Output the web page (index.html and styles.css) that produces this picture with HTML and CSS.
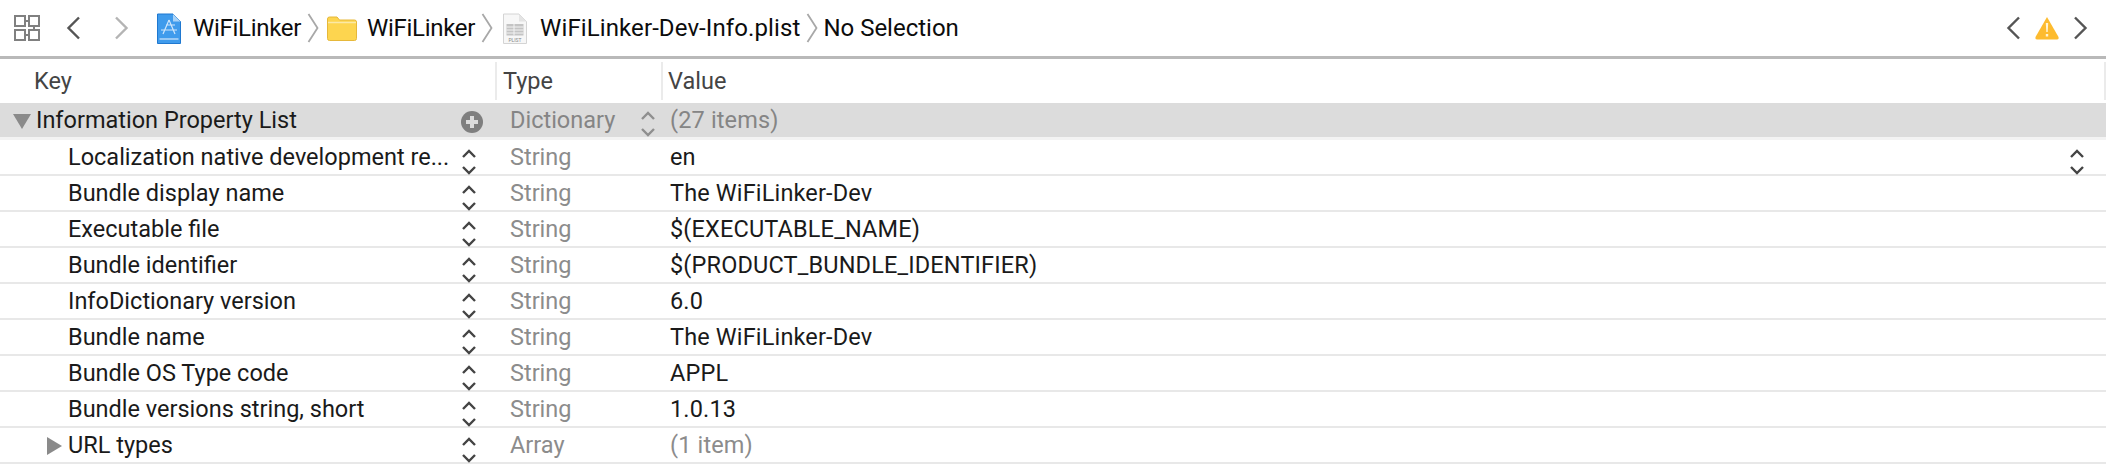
FILE: index.html
```html
<!DOCTYPE html>
<html lang="en">
<head>
  <meta charset="UTF-8" />
  <title>WiFiLinker-Dev-Info.plist</title>
  <link rel="stylesheet" href="styles.css">
</head>
<body>

  <svg class="defs" width="0" height="0">
    <symbol id="stepper" viewBox="0 0 16 32">
      <path d="M2 11 L8 5 L14 11 M2 21 L8 27 L14 21" fill="none" stroke="currentColor" stroke-width="2.4"/>
    </symbol>
    <symbol id="crumb" viewBox="0 0 12 30">
      <path d="M1.5 1 L10.5 15 L1.5 29" fill="none" stroke="#a8a8a8" stroke-width="1.8"/>
    </symbol>
  </svg>

  <div class="toolbar">
    <svg class="grid-icon" width="26" height="26" viewBox="0 0 26 26">
      <path d="M1 1 H11 V11 H1 Z M15 1 H25 V11 H15 Z M1 15 H11 V25 H1 Z M15 15 H25 V25 H15 Z M12 6 H15 M11 20 H14 M20 12 V15" fill="none" stroke="#808080" stroke-width="2"/>
    </svg>
    <svg class="nav-back" width="15" height="24" viewBox="0 0 15 24">
      <path d="M13 1.5 L2.5 12 L13 22.5" fill="none" stroke="#555" stroke-width="2.4"/>
    </svg>
    <svg class="nav-forward" width="15" height="24" viewBox="0 0 15 24">
      <path d="M2 1.5 L12.5 12 L2 22.5" fill="none" stroke="#b4b4b4" stroke-width="2.4"/>
    </svg>

    <svg class="app-icon" width="24" height="31" viewBox="0 0 24 31">
      <path d="M0.5 1 H16 L23.5 8.500 V30.500 H0.5 Z" fill="#3f9bec" stroke="#1f78d0"/>
      <path d="M16 1 V8.500 H23.500 Z" fill="#a9d3f7"/>
      <path d="M12 7 L6 21 M12 7 L18 21 M4 17 H20 M9 12 L18 12" fill="none" stroke="#cfe6fb" stroke-width="1.200"/>
      <path d="M2.500 26 H21.500" stroke="#d5eafc" stroke-width="1.200"/>
    </svg>
    <span class="crumb-text first">WiFiLinker</span>
    <svg class="crumb-sep" width="12" height="30"><use href="#crumb"/></svg>

    <svg class="folder-icon" width="30" height="25" viewBox="0 0 30 25">
      <path d="M0.500 3 Q0.500 1 2.500 1 H10 L12.500 4 H27.500 Q29.500 4 29.500 6 V22.500 Q29.500 24.500 27.500 24.500 H2.500 Q0.500 24.500 0.500 22.500 Z" fill="#fdd54f" stroke="#e6b83a"/>
      <path d="M1 6.500 H29" stroke="#fbe9a6" stroke-width="1.500"/>
    </svg>
    <span class="crumb-text second">WiFiLinker</span>
    <svg class="crumb-sep" width="12" height="30"><use href="#crumb"/></svg>

    <svg class="plist-icon" width="24" height="31" viewBox="0 0 24 31">
      <path d="M0.500 1 H16 L23.500 8.500 V30.500 H0.500 Z" fill="#f7f7f7" stroke="#d4d4d4"/>
      <path d="M16 1 V8.500 H23.500 Z" fill="#e4e4e4"/>
      <path d="M3.500 11 H20.500 V22.500 H3.500 Z" fill="#c4c4c4"/>
      <path d="M3.500 14 H20.500 M3.500 17 H20.500 M3.500 20 H20.500 M11 11 V22.500" stroke="#f3f3f3"/>
      <text class="plist-label" x="12" y="29" text-anchor="middle">PLIST</text>
    </svg>
    <span class="crumb-text file">WiFiLinker-Dev-Info.plist</span>
    <svg class="crumb-sep" width="12" height="30"><use href="#crumb"/></svg>
    <span class="crumb-text last">No Selection</span>

    <div class="issue-nav">
      <svg width="15" height="24" viewBox="0 0 15 24">
        <path d="M13 1.500 L2.500 12 L13 22.500" fill="none" stroke="#555" stroke-width="2.400"/>
      </svg>
      <svg width="24" height="24" viewBox="0 0 24 24">
        <path d="M12 1 L23.500 21 Q24 23.500 22 23.500 H2 Q0 23.500 0.500 21 Z" fill="#fdbb2f"/>
        <path d="M10.800 7 H13.200 L12.700 16 H11.300 Z M10.800 18 H13.200 V20.400 H10.800 Z" fill="#fff4d6"/>
      </svg>
      <svg width="15" height="24" viewBox="0 0 15 24">
        <path d="M2 1.500 L12.500 12 L2 22.500" fill="none" stroke="#555" stroke-width="2.400"/>
      </svg>
    </div>
  </div>

  <div class="plist">
    <div class="header">
      <div class="col-key">Key</div>
      <div class="col-type">Type</div>
      <div class="col-value">Value</div>
    </div>

    <div class="row root">
      <div class="cell-key">
        <span class="tri-down"></span>
        <span class="key-text">Information Property List</span>
        <svg class="add-icon" width="22" height="22" viewBox="0 0 22 22">
          <circle cx="11" cy="11" r="11" fill="#7f7f7f"/>
          <path d="M11 5 V17 M5 11 H17" stroke="#dcdcdc" stroke-width="4"/>
        </svg>
      </div>
      <div class="cell-type">Dictionary<svg class="type-step" width="16" height="32"><use href="#stepper"/></svg></div>
      <div class="cell-value muted">(27 items)</div>
    </div>

    <div class="row">
      <div class="cell-key"><span class="key-text">Localization native development re...</span><svg class="step" width="16" height="32"><use href="#stepper"/></svg></div>
      <div class="cell-type">String</div>
      <div class="cell-value">en<svg class="value-step" width="16" height="32"><use href="#stepper"/></svg></div>
    </div>
    <div class="row">
      <div class="cell-key"><span class="key-text">Bundle display name</span><svg class="step" width="16" height="32"><use href="#stepper"/></svg></div>
      <div class="cell-type">String</div>
      <div class="cell-value">The WiFiLinker-Dev</div>
    </div>
    <div class="row">
      <div class="cell-key"><span class="key-text">Executable file</span><svg class="step" width="16" height="32"><use href="#stepper"/></svg></div>
      <div class="cell-type">String</div>
      <div class="cell-value">$(EXECUTABLE_NAME)</div>
    </div>
    <div class="row">
      <div class="cell-key"><span class="key-text">Bundle identifier</span><svg class="step" width="16" height="32"><use href="#stepper"/></svg></div>
      <div class="cell-type">String</div>
      <div class="cell-value">$(PRODUCT_BUNDLE_IDENTIFIER)</div>
    </div>
    <div class="row">
      <div class="cell-key"><span class="key-text">InfoDictionary version</span><svg class="step" width="16" height="32"><use href="#stepper"/></svg></div>
      <div class="cell-type">String</div>
      <div class="cell-value">6.0</div>
    </div>
    <div class="row">
      <div class="cell-key"><span class="key-text">Bundle name</span><svg class="step" width="16" height="32"><use href="#stepper"/></svg></div>
      <div class="cell-type">String</div>
      <div class="cell-value">The WiFiLinker-Dev</div>
    </div>
    <div class="row">
      <div class="cell-key"><span class="key-text">Bundle OS Type code</span><svg class="step" width="16" height="32"><use href="#stepper"/></svg></div>
      <div class="cell-type">String</div>
      <div class="cell-value">APPL</div>
    </div>
    <div class="row">
      <div class="cell-key"><span class="key-text">Bundle versions string, short</span><svg class="step" width="16" height="32"><use href="#stepper"/></svg></div>
      <div class="cell-type">String</div>
      <div class="cell-value">1.0.13</div>
    </div>
    <div class="row">
      <div class="cell-key">
        <span class="tri-right"></span>
        <span class="key-text">URL types</span>
        <svg class="step" width="16" height="32"><use href="#stepper"/></svg>
      </div>
      <div class="cell-type">Array</div>
      <div class="cell-value muted">(1 item)</div>
    </div>
  </div>

</body>
</html>
```

FILE: styles.css
```css
body {
  margin: 0;
  background-color: #fff;
  color: #1a1a1a;
  font-family: Roboto, "Liberation Sans", sans-serif;
  font-size: 23.5px;
  overflow: hidden;
}

.defs {
  display: block;
  height: 0;
}

/* toolbar */
.toolbar {
  display: flex;
  align-items: center;
  height: 56px;
  padding-left: 14px;
  padding-right: 18px;
  border-bottom: 3px solid #b9b9b9;
  color: #0c0c0c;
  font-size: 24px;
}

.nav-back {
  margin-left: 26px;
}

.nav-forward {
  margin-left: 33px;
}

.app-icon {
  margin-left: 28px;
}

.crumb-text {
  white-space: nowrap;
}

.crumb-text.first {
  margin-left: 12px;
  letter-spacing: -0.3px;
}

.crumb-text.second {
  margin-left: 10px;
  letter-spacing: -0.3px;
}

.crumb-text.file {
  margin-left: 13px;
  letter-spacing: 0.1px;
}

.crumb-text.last {
  margin-left: 5px;
}

.crumb-sep {
  margin-left: 6px;
}

.folder-icon {
  margin-left: 8px;
}

.plist-icon {
  margin-left: 10px;
}

.plist-label {
  font-size: 5px;
  fill: #8a8a8a;
}

.issue-nav {
  display: flex;
  align-items: center;
  gap: 14px;
  margin-left: auto;
}

/* table */
.header {
  display: grid;
  grid-template-columns: 497px 166px 1fr;
  height: 44px;
  color: #444;
}

.col-key,
.col-type,
.col-value {
  display: flex;
  align-items: center;
  margin: 3px 0;
  border-right: 2px solid #ebebeb;
}

.col-key {
  padding-left: 34px;
}

.col-type {
  padding-left: 6px;
}

.col-value {
  padding-left: 5px;
}

.row {
  display: grid;
  grid-template-columns: 497px 166px 1fr;
  align-items: center;
  height: 34px;
  border-bottom: 2px solid #e8e8e8;
  position: relative;
}

.row.root {
  background-color: #dcdcdc;
  border-bottom: 3px solid #f3f3f3;
}

.cell-key {
  display: flex;
  align-items: center;
  padding-left: 68px;
}

.root .cell-key {
  padding-left: 36px;
}

.key-text {
  white-space: nowrap;
}

.cell-type {
  display: flex;
  align-items: center;
  padding-left: 13px;
  color: #8c8c8c;
}

.cell-value {
  display: flex;
  align-items: center;
  padding-left: 7px;
  color: #1a1a1a;
  letter-spacing: 0.15px;
}

.cell-value.muted {
  color: #8c8c8c;
}

.root .cell-type,
.root .cell-value {
  color: #858585;
}

/* steppers and disclosure marks sit over the row */
.step {
  color: #444;
  position: absolute;
  left: 461px;
  top: 6px;
}

.type-step {
  color: #8f8f8f;
  position: absolute;
  left: 640px;
  top: 5px;
}

.value-step {
  color: #444;
  position: absolute;
  right: 21px;
  top: 6px;
}

.add-icon {
  position: absolute;
  left: 461px;
  top: 8px;
}

.tri-down {
  position: absolute;
  left: 13px;
  top: 11px;
  width: 0;
  height: 0;
  border-left: 9px solid transparent;
  border-right: 9px solid transparent;
  border-top: 15px solid #8a8a8a;
}

.tri-right {
  position: absolute;
  left: 47px;
  top: 9px;
  width: 0;
  height: 0;
  border-top: 9px solid transparent;
  border-bottom: 9px solid transparent;
  border-left: 15px solid #8a8a8a;
}
```
